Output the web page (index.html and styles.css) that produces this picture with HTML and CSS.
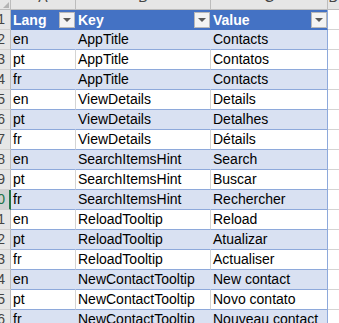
FILE: index.html
```html
<!DOCTYPE html>
<html>
<head>
<meta charset="utf-8">
<link rel="stylesheet" href="styles.css">
</head>
<body>
<div class="sheet">
  <div class="corner"><span class="corner-tri"></span></div>
  <div class="colhead"><span>A</span></div>
  <div class="colhead"><span>B</span></div>
  <div class="colhead"><span>C</span></div>
  <div class="colhead last"><span>D</span></div>

  <div class="rowhead"><span>1</span></div>
  <div class="th"><span>Lang</span><span class="filter"><span class="tri"></span></span></div>
  <div class="th"><span>Key</span><span class="filter"><span class="tri"></span></span></div>
  <div class="th endcol"><span>Value</span><span class="filter"><span class="tri"></span></span></div>
  <div class="out"></div>

  <div class="rowhead"><span>2</span></div>
  <div class="td band">en</div><div class="td band">AppTitle</div><div class="td band endcol">Contacts</div><div class="out"></div>
  <div class="rowhead"><span>3</span></div>
  <div class="td">pt</div><div class="td">AppTitle</div><div class="td endcol">Contatos</div><div class="out"></div>
  <div class="rowhead"><span>4</span></div>
  <div class="td band">fr</div><div class="td band">AppTitle</div><div class="td band endcol">Contacts</div><div class="out"></div>
  <div class="rowhead"><span>5</span></div>
  <div class="td">en</div><div class="td">ViewDetails</div><div class="td endcol">Details</div><div class="out"></div>
  <div class="rowhead"><span>6</span></div>
  <div class="td band">pt</div><div class="td band">ViewDetails</div><div class="td band endcol">Detalhes</div><div class="out"></div>
  <div class="rowhead"><span>7</span></div>
  <div class="td">fr</div><div class="td">ViewDetails</div><div class="td endcol">Détails</div><div class="out"></div>
  <div class="rowhead"><span>8</span></div>
  <div class="td band">en</div><div class="td band">SearchItemsHint</div><div class="td band endcol">Search</div><div class="out"></div>
  <div class="rowhead"><span>9</span></div>
  <div class="td">pt</div><div class="td">SearchItemsHint</div><div class="td endcol">Buscar</div><div class="out"></div>
  <div class="rowhead selected"><span>10</span></div>
  <div class="td band">fr</div><div class="td band">SearchItemsHint</div><div class="td band endcol">Rechercher</div><div class="out"></div>
  <div class="rowhead"><span>11</span></div>
  <div class="td">en</div><div class="td">ReloadTooltip</div><div class="td endcol">Reload</div><div class="out"></div>
  <div class="rowhead"><span>12</span></div>
  <div class="td band">pt</div><div class="td band">ReloadTooltip</div><div class="td band endcol">Atualizar</div><div class="out"></div>
  <div class="rowhead"><span>13</span></div>
  <div class="td">fr</div><div class="td">ReloadTooltip</div><div class="td endcol">Actualiser</div><div class="out"></div>
  <div class="rowhead"><span>14</span></div>
  <div class="td band">en</div><div class="td band">NewContactTooltip</div><div class="td band endcol">New contact</div><div class="out"></div>
  <div class="rowhead"><span>15</span></div>
  <div class="td">pt</div><div class="td">NewContactTooltip</div><div class="td endcol">Novo contato</div><div class="out"></div>
  <div class="rowhead"><span>16</span></div>
  <div class="td band">fr</div><div class="td band">NewContactTooltip</div><div class="td band endcol">Nouveau contact</div><div class="out"></div>
</div>
</body>
</html>
```
FILE: styles.css
```css
html, body {
  margin: 0;
  padding: 0;
  background: #ffffff;
  overflow: hidden;
}
.sheet {
  display: grid;
  grid-template-columns: 11px 65px 135px 117px 1fr;
  grid-template-rows: 10px repeat(16, 20px);
  width: 339px;
  font-family: "Liberation Sans", Arial, sans-serif;
  font-size: 14px;
  color: #000;
}
.sheet > div {
  box-sizing: border-box;
  overflow: hidden;
  white-space: nowrap;
}
.corner {
  background: #e6e6e6;
  border-right: 1px solid #bcbcbc;
  border-bottom: 1px solid #bcbcbc;
  display: flex;
  justify-content: flex-end;
  align-items: flex-end;
  padding: 0 1px 1px 0;
}
.corner-tri {
  width: 0;
  height: 0;
  border-left: 6px solid transparent;
  border-bottom: 6px solid #b4b4b4;
}
.colhead {
  background: #e6e6e6;
  border-right: 1px solid #bcbcbc;
  border-bottom: 1px solid #bcbcbc;
  text-align: center;
  color: #444;
}
.colhead.last { border-right: none; }
.colhead span {
  display: block;
  line-height: 14px;
  margin-top: -10px;
}
.rowhead {
  background: #e6e6e6;
  border-right: 1px solid #bcbcbc;
  border-bottom: 1px solid #d0d0d0;
  text-align: right;
  color: #444;
  line-height: 19px;
  padding-right: 5px;
  direction: rtl;
}
.rowhead span { direction: ltr; unicode-bidi: embed; }
.rowhead.selected {
  background: #d2d2d2;
  color: #217346;
  border-right: 2px solid #217346;
  padding-right: 4px;
}
.th {
  background: #4472c4;
  color: #fff;
  font-weight: bold;
  border-right: 1px solid #4472c4;
  border-bottom: 1px solid #4472c4;
  display: flex;
  align-items: center;
  justify-content: space-between;
  padding-left: 2px;
}
.th.endcol { border-right: 1px solid #8ea9db; }
.filter {
  width: 16px;
  height: 16px;
  box-sizing: border-box;
  background: #f3f3f3;
  border: 1px solid #b8b8b8;
  display: flex;
  align-items: center;
  justify-content: center;
  padding-top: 1px;
}
.tri {
  width: 0;
  height: 0;
  border-left: 4px solid transparent;
  border-right: 4px solid transparent;
  border-top: 4px solid #595959;
}
.td {
  background: #fff;
  border-right: 1px solid #d4d4d4;
  border-bottom: 1px solid #8ea9db;
  padding-left: 2px;
  line-height: 19px;
}
.td.band {
  background: #d9e1f2;
  border-right-color: #d9e1f2;
}
.td.endcol { border-right: 1px solid #8ea9db; }
.out {
  background: #fff;
  border-bottom: 1px solid #d4d4d4;
}
```
